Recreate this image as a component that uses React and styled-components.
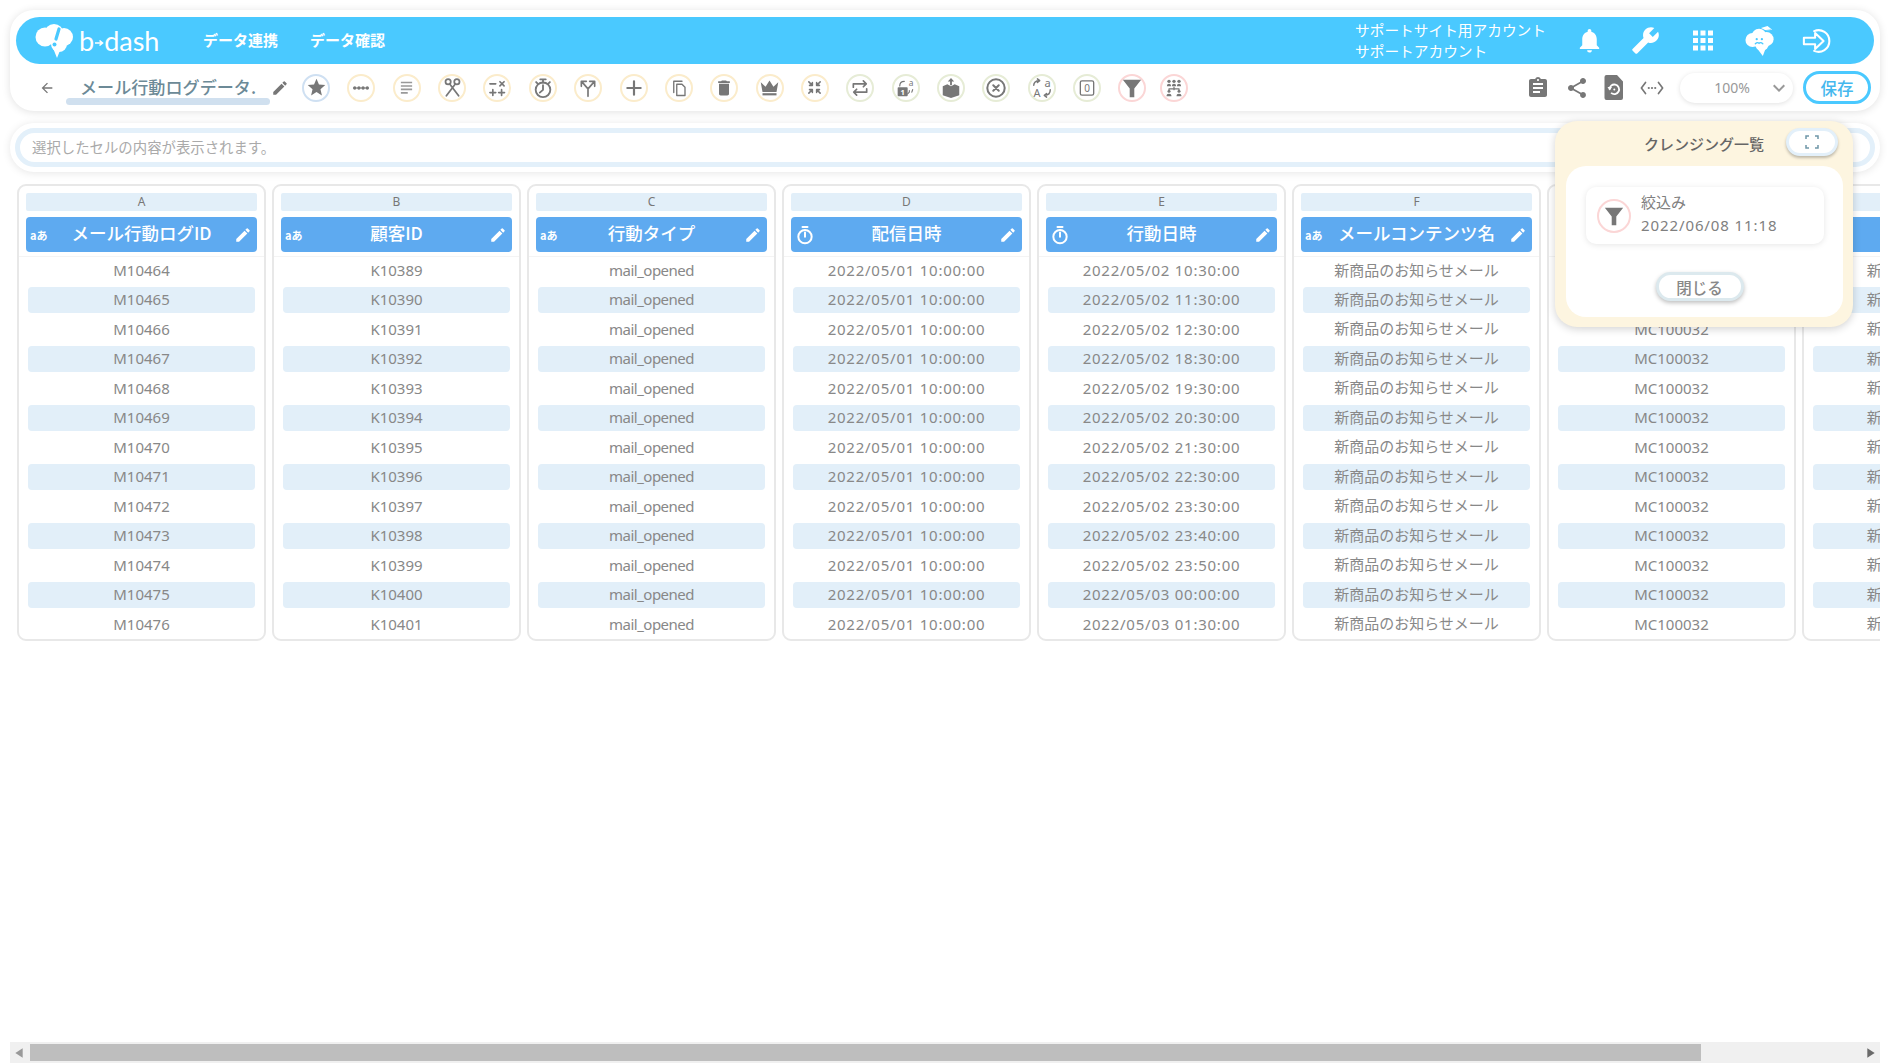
import React from 'react'
import styled, { createGlobalStyle } from 'styled-components'
import { MdStar, MdEdit, MdDelete, MdNotifications, MdBuild, MdApps, MdAssignment, MdShare, MdKeyboardArrowDown, MdArrowBack, MdPlayArrow } from 'react-icons/md'

const GlobalStyle = createGlobalStyle`
  html, body {
    margin: 0;
    padding: 0;
    background: #fff;
    font-family: "Noto Sans", "Noto Sans CJK JP", sans-serif;
  }
  * { box-sizing: border-box; }
`

const Page = styled.div`
  position: relative;
  width: 1890px;
  height: 1063px;
  padding-top: 10px;
  overflow: hidden;
  display: flex;
  flex-direction: column;
`

const TopCard = styled.div`
  margin: 0 10px;
  height: 101px;
  padding: 7px 6px 0;
  background: #fff;
  border-radius: 24px;
  box-shadow: 0 1px 8px rgba(0, 0, 0, 0.12);
`

const BlueBar = styled.header`
  height: 47px;
  background: #4ac9ff;
  border-radius: 24px;
  display: flex;
  align-items: center;
  padding: 0 42px 0 19px;
  color: #fff;
`

const Logo = styled.div`
  display: flex;
  align-items: center;
  gap: 6px;
  width: 168px;
`

const LogoText = styled.span`
  font-family: "Lato", sans-serif;
  font-size: 27px;
  font-weight: 400;
  line-height: 1;
  display: flex;
  align-items: center;
`

const LogoArrow = styled.svg`
  width: 10px;
  height: 10px;
  margin-top: 5px;
`

const NavItem = styled.a`
  font-family: "Noto Sans CJK JP", sans-serif;
  font-size: 15px;
  font-weight: 700;
  margin-right: 32px;
  padding-bottom: 2px;
`

const BarRight = styled.div`
  margin-left: auto;
  display: flex;
  align-items: center;
  gap: 27px;
`

const Account = styled.div`
  font-family: "Noto Sans CJK JP", sans-serif;
  font-size: 14.7px;
  line-height: 21px;
  width: 193px;
  margin-right: -1px;
  padding-bottom: 2px;
`

const BarIcon = styled.span`
  width: 30px;
  height: 30px;
  display: flex;
  align-items: center;
  justify-content: center;
  ${(p) => (p.$flip ? 'transform: scaleX(-1);' : '')}
`

const Toolbar = styled.div`
  height: 47px;
  display: flex;
  align-items: center;
  padding: 0 3px 0 23px;
  color: #777;
`

const BackButton = styled.span`
  display: flex;
  width: 16px;
  margin-right: 11px;
`

const TitleBox = styled.div`
  position: relative;
  width: 204px;
  padding-left: 14px;
  padding-bottom: 2px;
  font-family: "Noto Sans CJK JP", sans-serif;
  font-size: 17.1px;
  font-weight: 500;
  color: #6c8a97;
  white-space: nowrap;
  &::after {
    content: '';
    position: absolute;
    left: 0;
    right: 0;
    bottom: -4px;
    height: 7px;
    border-radius: 4px;
    background: #d0e0ef;
  }
`

const TitleEdit = styled.span`
  display: flex;
  margin: 0 13px 0 1px;
`

const Tools = styled.div`
  display: flex;
  align-items: center;
  gap: 17.36px;
`

const toneColors = {
  blue: '#cfe0f2',
  orange: '#fbeccb',
  green: '#e6ecd6',
  red: '#fbd6d6',
}

const ToolCircle = styled.span`
  width: 28px;
  height: 28px;
  flex: none;
  border-radius: 50%;
  border: 2px solid ${(p) => toneColors[p.$tone]};
  display: flex;
  align-items: center;
  justify-content: center;
  color: #777;
  ${(p) => (p.$tight ? 'margin-left: -4px;' : '')}
`

const ToolbarRight = styled.div`
  margin-left: auto;
  display: flex;
  align-items: center;
`

const ActionIcon = styled.span`
  width: 24px;
  height: 28px;
  display: flex;
  align-items: center;
  justify-content: center;
  color: #777;
  margin-right: ${(p) => p.$gap}px;
`

const ZoomSelect = styled.div`
  width: 113px;
  height: 30px;
  border-radius: 15px;
  background: #fff;
  box-shadow: 0 1px 5px rgba(0, 0, 0, 0.12);
  display: flex;
  align-items: center;
  justify-content: flex-end;
  padding-right: 2px;
  font-size: 14px;
  color: #999;
  gap: 17px;
  margin-right: 10px;
`

const SaveButton = styled.button`
  width: 68px;
  height: 33px;
  border-radius: 17px;
  border: 3px solid #4ac9ff;
  background: #fff;
  color: #45b8ee;
  padding: 0;
  font-family: "Noto Sans CJK JP", sans-serif;
  font-size: 16.5px;
  font-weight: 500;
`

const FormulaCard = styled.div`
  margin: 12px 10px 0;
  height: 49px;
  padding: 5px;
  background: #fff;
  border-radius: 24px;
  box-shadow: 0 1px 8px rgba(0, 0, 0, 0.1);
`

const FormulaInput = styled.div`
  height: 39px;
  border: 5px solid #e3f0fa;
  border-radius: 20px;
  display: flex;
  align-items: center;
  padding: 0 0 2px 12px;
  font-family: "Noto Sans CJK JP", sans-serif;
  font-size: 14.4px;
  color: #aaa;
`

const TableArea = styled.div`
  margin: 12px 10px 0 17px;
  display: flex;
  gap: 6px;
  overflow: hidden;
  align-items: flex-start;
`

const Column = styled.section`
  flex: 0 0 ${(p) => p.$width}px;
  height: 457px;
  border: 2px solid #e8e8e8;
  border-radius: 9px;
  padding-top: 7px;
  background: #fff;
`

const ColLetter = styled.div`
  height: 18px;
  margin: 0 7px;
  background: #e2eff9;
  border-radius: 2px;
  font-size: 12px;
  line-height: 17px;
  text-align: center;
  color: #777;
`

const ColHead = styled.div`
  position: relative;
  height: 35px;
  margin: 6px 7px 3.5px;
  padding-bottom: 4px;
  background: #5eaaf0;
  border-radius: 4px;
  display: flex;
  align-items: center;
  justify-content: center;
  color: #fff;
  font-family: "Noto Sans CJK JP", sans-serif;
  font-size: 17.5px;
  font-weight: 500;
`

const TypeIcon = styled.span`
  position: absolute;
  left: 4px;
  top: 50%;
  transform: translateY(-50%);
  display: flex;
  font-size: 11px;
  font-weight: 700;
`

const HeadEdit = styled.span`
  position: absolute;
  right: 5px;
  top: 50%;
  transform: translateY(-50%);
  display: flex;
`

const Row = styled.div`
  height: 29.53px;
  padding: 2px 9px;
  border-top: ${(p) => (p.$first ? '1px solid #f4f4f4' : 'none')};
`

const Cell = styled.div`
  height: 100%;
  padding-bottom: ${(p) => (p.$cjk ? 3 : 1)}px;
  border-radius: 4px;
  background: ${(p) => (p.$zebra ? '#e2eff9' : 'transparent')};
  display: flex;
  align-items: center;
  justify-content: center;
  font-family: "Noto Sans", "Noto Sans CJK JP", sans-serif;
  font-size: 15px;
  letter-spacing: ${(p) => p.$spacing || 0}px;
  color: #888;
  white-space: nowrap;
`

const Panel = styled.aside`
  position: absolute;
  left: 1555px;
  top: 121px;
  width: 298px;
  height: 206px;
  padding: 45px 10px 10px 11px;
  background: #fdf5e0;
  border-radius: 22px;
  box-shadow: 0 2px 8px rgba(0, 0, 0, 0.18);
`

const PanelTitle = styled.div`
  position: absolute;
  left: 0;
  right: 0;
  top: 12px;
  text-align: center;
  font-family: "Noto Sans CJK JP", sans-serif;
  font-size: 15px;
  font-weight: 500;
  color: #666;
`

const ExpandButton = styled.span`
  position: absolute;
  top: 7px;
  right: 15px;
  width: 52px;
  height: 28px;
  background: #fff;
  border: 3px solid #e3f0fa;
  border-radius: 14px;
  box-shadow: 0 2px 3px rgba(0, 0, 0, 0.25);
  display: flex;
  align-items: center;
  justify-content: center;
`

const PanelBody = styled.div`
  height: 151px;
  background: #fff;
  border-radius: 20px;
  padding: 21px 19px 0 20px;
  display: flex;
  flex-direction: column;
  align-items: center;
`

const LogCard = styled.div`
  width: 100%;
  height: 57px;
  border-radius: 10px;
  background: #fff;
  box-shadow: 0 1px 6px rgba(0, 0, 0, 0.1);
  display: flex;
  align-items: center;
  padding-left: 11px;
  gap: 10px;
`

const LogCircle = styled.span`
  width: 34px;
  height: 34px;
  border: 2px solid #fbd6d6;
  border-radius: 50%;
  display: flex;
  align-items: center;
  justify-content: center;
  color: #777;
`

const LogText = styled.div`
  font-family: "Noto Sans", "Noto Sans CJK JP", sans-serif;
  font-size: 15px;
  line-height: 23px;
  padding-bottom: 4px;
  color: #808080;
`

const LogDate = styled.span`
  letter-spacing: 0.9px;
`

const CloseButton = styled.button`
  margin: 28px 11px 0 0;
  width: 88px;
  height: 29px;
  padding: 0;
  background: #fff;
  border: 3px solid #dce9ee;
  border-radius: 15px;
  box-shadow: 0 2px 4px rgba(0, 0, 0, 0.25);
  font-family: "Noto Sans CJK JP", sans-serif;
  font-size: 15.5px;
  font-weight: 500;
  color: #888;
`

const ScrollBar = styled.div`
  margin: auto 10px 0;
  height: 21px;
  padding: 2px 0;
  background: #f0f0f0;
  display: flex;
  align-items: center;
  color: #6a6a6a;
`

const ScrollArrow = styled.span`
  flex: none;
  width: 20px;
  display: flex;
  justify-content: center;
  ${(p) => (p.$left ? 'transform: scaleX(-1); color: #999;' : 'margin-left: auto;')}
`

const ScrollThumb = styled.div`
  flex: none;
  width: 1671px;
  height: 17px;
  background: #bebebe;
`

/* toolbar and logo drawings */
const Svg = ({ size = 20, children, fill = 'none', ...rest }) => (
  <svg width={size} height={size} viewBox="0 0 24 24" fill={fill} stroke={fill === 'none' ? 'currentColor' : 'none'} strokeWidth="2" strokeLinecap="round" strokeLinejoin="round" {...rest}>
    {children}
  </svg>
)

const DotsIcon = () => (
  <Svg>
    <path d="M3 12h18" strokeWidth="1.4" />
    <g fill="currentColor" stroke="none">
      <circle cx="4.5" cy="12" r="2" /><circle cx="9.5" cy="12" r="2" /><circle cx="14.5" cy="12" r="2" /><circle cx="19.5" cy="12" r="2" />
    </g>
  </Svg>
)
const LinesIcon = () => (
  <Svg size={15} style={{ color: '#999' }}>
    <path d="M3 4h18M3 9.500h18M3 15h18M3 20.500h11" strokeWidth="2.600" strokeLinecap="butt" />
  </Svg>
)
const ScissorsIcon = () => (
  <Svg size={21}>
    <circle cx="7" cy="5.500" r="3" /><circle cx="17" cy="5.500" r="3" />
    <path d="M8.800 8 19 21.500M15.200 8 5 21.500" />
  </Svg>
)
const CalcIcon = () => (
  <Svg size={20}>
    <path d="M3.500 7h7M15.500 4.500l5 5M20.500 4.500l-5 5M7 14v7M3.500 17.500h7M17.500 14v7M14 17.500h7" />
  </Svg>
)
const TimerIcon = () => (
  <Svg size={22}>
    <circle cx="12" cy="14" r="8" />
    <path d="M9 2.500h6M12 2.500V6M4.500 5.500l2 2M19.500 5.500l-2 2M12 9v5l-3.500 3" />
  </Svg>
)
const SplitIcon = () => (
  <Svg size={20}>
    <path d="M12 22v-9L5 5M12 13l7-8M4 10V4h6M14 4h6v6" />
  </Svg>
)
const PlusIcon = () => (
  <Svg size={20} strokeWidth="2.600">
    <path d="M12 4v16M4 12h16" />
  </Svg>
)
const CopyIcon = () => (
  <Svg size={18} strokeWidth="1.800">
    <path d="M16 3H5v15" />
    <path d="M9 7h7l4 4v11H9z" />
  </Svg>
)
const CrownIcon = () => (
  <Svg size={21} fill="currentColor">
    <path d="M2 6l5.500 5L12 4l4.500 7L22 6l-2 11H4z" />
    <rect x="4" y="18.500" width="16" height="2.500" />
  </Svg>
)
const CompressIcon = () => (
  <Svg size={17} strokeWidth="2.200">
    <path d="M4 4l4.500 4.500M5 9h4V5M20 4l-4.500 4.500M19 9h-4V5M4 20l4.500-4.500M5 15h4v4M20 20l-4.500-4.500M19 15h-4v4" />
  </Svg>
)
const RepeatIcon = () => (
  <Svg size={20}>
    <path d="M4 11V7h15M16 3.500 19.500 7 16 10.500M20 13v4H5M8 13.500 4.500 17 8 20.500" />
  </Svg>
)
const LockIcon = () => (
  <Svg size={20} strokeWidth="1.400">
    <rect x="2" y="11" width="12" height="11" rx="1" fill="currentColor" stroke="none" />
    <text x="8" y="20" fontSize="9" fontWeight="700" textAnchor="middle" fill="#fff" stroke="none">1</text>
    <text x="18" y="10" fontSize="10" textAnchor="middle" fill="currentColor" stroke="none">a</text>
    <path d="M4.500 9.500C4.500 6 7 4 10 4M16 15v2l-2 2M20 14l-1 3" />
  </Svg>
)
const BoxUpIcon = () => (
  <Svg size={22} fill="currentColor">
    <path d="M3 10l5-2 4 2 4-2 5 2v10l-9 3-9-3z" />
    <path d="M11 9V5H8.500L12 1l3.500 4H13v4z" />
  </Svg>
)
const CircleXIcon = () => (
  <Svg size={22} strokeWidth="2.200">
    <circle cx="12" cy="12" r="9.500" />
    <path d="M9 9l6 6M15 9l-6 6" />
  </Svg>
)
const TranslateIcon = () => (
  <Svg size={22} strokeWidth="1.600">
    <text x="6.500" y="22" fontSize="12" textAnchor="middle" fill="currentColor" stroke="none">A</text>
    <text x="18" y="11" fontSize="12" textAnchor="middle" fill="currentColor" stroke="none">a</text>
    <path d="M3 9c0-3 2-5 6-5M7 2l2.500 2L7 6M21 14c0 4-2 6-6 6M17 18l-2.500 2 2.500 2" />
  </Svg>
)
const ZeroBoxIcon = () => (
  <Svg size={20} strokeWidth="1.600">
    <rect x="4" y="3.500" width="16" height="17" rx="2" />
    <text x="12" y="16.500" fontSize="12" textAnchor="middle" fill="currentColor" stroke="none">0</text>
  </Svg>
)
const FunnelIcon = ({ size = 22 }) => (
  <Svg size={size} fill="currentColor">
    <path d="M2 3h20l-7.500 9.500V22h-5v-9.500z" />
  </Svg>
)
const PeopleIcon = () => (
  <Svg size={20} strokeWidth="1.500">
    <g fill="currentColor" stroke="none">
      <circle cx="6" cy="4" r="2" /><circle cx="12" cy="4" r="2" /><circle cx="18" cy="4" r="2" />
      <path d="M3.500 10c0-2 1-3 2.500-3s2.500 1 2.500 3zM9.500 10c0-2 1-3 2.500-3s2.500 1 2.500 3zM15.500 10c0-2 1-3 2.500-3s2.500 1 2.500 3z" />
      <circle cx="6" cy="16" r="1.800" /><circle cx="18" cy="16" r="1.800" />
      <path d="M3 22c0-2 1-3 3-3s3 1 3 3zM15 22c0-2 1-3 3-3s3 1 3 3z" />
    </g>
    <path d="M12 11v3M6 14v-1h12v1" />
  </Svg>
)

const CloudLogo = () => (
  <svg width="38" height="34" viewBox="0 0 38 34">
    <g fill="#fff">
      <circle cx="10" cy="13" r="9.500" /><circle cx="19" cy="9.500" r="9.500" /><circle cx="29" cy="13" r="9" />
      <circle cx="24" cy="20" r="8" /><path d="M18 24h8l-4 10z" />
    </g>
    <path d="M24 5l-3 10" stroke="#4ac9ff" strokeWidth="3.200" strokeLinecap="round" />
    <circle cx="19.500" cy="20.500" r="2" fill="#4ac9ff" />
  </svg>
)

const BrainIcon = () => (
  <svg width="32" height="34" viewBox="0 0 32 34">
    <g fill="#fff">
      <circle cx="8" cy="16" r="7.500" /><circle cx="15" cy="12" r="8" /><circle cx="23" cy="15" r="7.500" />
      <circle cx="18" cy="20" r="7.500" /><path d="M13 25h9l-3 8z" />
      <path d="M17 3l7-2 5 4-6 1z" />
    </g>
    <path d="M21 6l7-1" stroke="#4ac9ff" strokeWidth="0.800" />
    <circle cx="12.500" cy="15" r="1.200" fill="#4ac9ff" /><circle cx="18" cy="15" r="1.200" fill="#4ac9ff" />
    <path d="M11 20c2-2 3-1.500 4-.5 1-1 2-1.500 4 .5" stroke="#4ac9ff" strokeWidth="1.400" fill="none" strokeLinecap="round" />
  </svg>
)

const LoginIcon = () => (
  <svg width="32" height="26" viewBox="0 0 32 26" fill="none" stroke="#fff" strokeWidth="2.200" strokeLinejoin="round" strokeLinecap="round">
    <path d="M2 9.500h12V4.500L23 13l-9 8.500v-5H2z" />
    <path d="M13 2.500A11.500 11.500 0 1 1 13 23.500" />
  </svg>
)

const RestoreDocIcon = () => (
  <svg width="20" height="27" viewBox="0 0 20 27">
    <path d="M2.500 1H13l6 6.500V24a2 2 0 0 1-2 2H2.500a2 2 0 0 1-2-2V3a2 2 0 0 1 2-2z" fill="currentColor" />
    <path d="M5.500 15.500a4.800 4.800 0 1 1 1.600 3.400" fill="none" stroke="#fff" strokeWidth="1.800" />
    <path d="M3.500 13h4.500l-2.200 3.500z" fill="#fff" />
    <circle cx="10.300" cy="15.500" r="1" fill="#fff" />
  </svg>
)

const CodeIcon = () => (
  <svg width="26" height="16" viewBox="0 0 26 16" fill="none" stroke="currentColor" strokeWidth="1.800" strokeLinecap="round" strokeLinejoin="round">
    <path d="M6 2 1.500 8 6 14M20 2l4.500 6L20 14" />
    <g fill="currentColor" stroke="none"><circle cx="9.500" cy="8" r="1.200" /><circle cx="13" cy="8" r="1.200" /><circle cx="16.500" cy="8" r="1.200" /></g>
  </svg>
)

const ClockIcon = () => (
  <Svg size={20} strokeWidth="2.400">
    <circle cx="12" cy="14" r="8" />
    <path d="M9 2.500h6M12 9v5" />
  </Svg>
)

const ExpandIcon = () => (
  <svg width="14" height="14" viewBox="0 0 14 14" fill="none" stroke="#6f97a8" strokeWidth="1.500">
    <path d="M1 4V1h3M10 1h3v3M1 10v3h3M10 13h3v-3" />
  </svg>
)

const tools = [
  { tone: 'blue', icon: <MdStar size={21} /> },
  { tone: 'orange', icon: <DotsIcon /> },
  { tone: 'orange', icon: <LinesIcon /> },
  { tone: 'orange', icon: <ScissorsIcon /> },
  { tone: 'orange', icon: <CalcIcon /> },
  { tone: 'orange', icon: <TimerIcon /> },
  { tone: 'orange', icon: <SplitIcon /> },
  { tone: 'orange', icon: <PlusIcon /> },
  { tone: 'orange', icon: <CopyIcon /> },
  { tone: 'orange', icon: <MdDelete size={20} /> },
  { tone: 'orange', icon: <CrownIcon /> },
  { tone: 'orange', icon: <CompressIcon /> },
  { tone: 'green', icon: <RepeatIcon /> },
  { tone: 'green', icon: <LockIcon /> },
  { tone: 'green', icon: <BoxUpIcon /> },
  { tone: 'green', icon: <CircleXIcon /> },
  { tone: 'green', icon: <TranslateIcon /> },
  { tone: 'green', icon: <ZeroBoxIcon /> },
  { tone: 'red', icon: <FunnelIcon /> },
  { tone: 'red', tight: true, icon: <PeopleIcon /> },
]

const seq = (prefix, start) => Array.from({ length: 13 }, (_, i) => `${prefix}${start + i}`)
const same = (value) => Array.from({ length: 13 }, () => value)

const columns = [
  { letter: 'A', title: 'メール行動ログID', rows: seq('M', 10464) },
  { letter: 'B', title: '顧客ID', rows: seq('K', 10389) },
  { letter: 'C', title: '行動タイプ', spacing: -0.5, rows: same('mail_opened') },
  { letter: 'D', title: '配信日時', date: true, spacing: 0.76, rows: same('2022/05/01 10:00:00') },
  {
    letter: 'E',
    title: '行動日時',
    date: true,
    spacing: 0.76,
    rows: ['10:30', '11:30', '12:30', '18:30', '19:30', '20:30', '21:30', '22:30', '23:30', '23:40', '23:50']
      .map((t) => `2022/05/02 ${t}:00`)
      .concat(['2022/05/03 00:00:00', '2022/05/03 01:30:00']),
  },
  { letter: 'F', title: 'メールコンテンツ名', cjk: true, rows: same('新商品のお知らせメール') },
  { letter: 'G', title: 'メールコンテンツID', rows: same('MC100032') },
  { letter: 'H', title: '件名', cjk: true, width: 294, rows: same('新商品のお知らせメール') },
]

export default function App() {
  return (
    <Page>
      <GlobalStyle />
      <TopCard>
        <BlueBar>
          <Logo>
            <CloudLogo />
            <LogoText>
              b
              <LogoArrow viewBox="0 0 10 10" fill="none" stroke="#fff" strokeWidth="1.600">
                <path d="M1 5h7M5.500 2.500 8.500 5l-3 2.500" />
              </LogoArrow>
              dash
            </LogoText>
          </Logo>
          <NavItem>データ連携</NavItem>
          <NavItem>データ確認</NavItem>
          <BarRight>
            <Account>
              サポートサイト用アカウント
              <br />
              サポートアカウント
            </Account>
            <BarIcon><MdNotifications size={29} color="#fff" /></BarIcon>
            <BarIcon $flip><MdBuild size={29} color="#fff" /></BarIcon>
            <BarIcon><MdApps size={31} color="#fff" /></BarIcon>
            <BarIcon><BrainIcon /></BarIcon>
            <BarIcon><LoginIcon /></BarIcon>
          </BarRight>
        </BlueBar>
        <Toolbar>
          <BackButton><MdArrowBack size={16} /></BackButton>
          <TitleBox>メール行動ログデータ.</TitleBox>
          <TitleEdit><MdEdit size={18} /></TitleEdit>
          <Tools>
            {tools.map((t, i) => (
              <ToolCircle key={i} $tone={t.tone} $tight={t.tight}>{t.icon}</ToolCircle>
            ))}
          </Tools>
          <ToolbarRight>
            <ActionIcon $gap={15}><MdAssignment size={28} /></ActionIcon>
            <ActionIcon $gap={13}><MdShare size={26} /></ActionIcon>
            <ActionIcon $gap={14}><RestoreDocIcon /></ActionIcon>
            <ActionIcon $gap={16}><CodeIcon /></ActionIcon>
            <ZoomSelect>
              100%
              <MdKeyboardArrowDown size={24} />
            </ZoomSelect>
            <SaveButton>保存</SaveButton>
          </ToolbarRight>
        </Toolbar>
      </TopCard>

      <FormulaCard>
        <FormulaInput>選択したセルの内容が表示されます。</FormulaInput>
      </FormulaCard>

      <TableArea>
        {columns.map((col) => (
          <Column key={col.letter} $width={col.width || 249}>
            <ColLetter>{col.letter}</ColLetter>
            <ColHead>
              <TypeIcon>{col.date ? <ClockIcon /> : 'aあ'}</TypeIcon>
              {col.title}
              <HeadEdit><MdEdit size={18} /></HeadEdit>
            </ColHead>
            {col.rows.map((value, i) => (
              <Row key={i} $first={i === 0}>
                <Cell $zebra={i % 2 === 1} $spacing={col.spacing} $cjk={col.cjk}>{value}</Cell>
              </Row>
            ))}
          </Column>
        ))}
      </TableArea>

      <Panel>
        <PanelTitle>クレンジング一覧</PanelTitle>
        <ExpandButton><ExpandIcon /></ExpandButton>
        <PanelBody>
          <LogCard>
            <LogCircle><FunnelIcon size={22} /></LogCircle>
            <LogText>
              絞込み
              <br />
              <LogDate>2022/06/08 11:18</LogDate>
            </LogText>
          </LogCard>
          <CloseButton>閉じる</CloseButton>
        </PanelBody>
      </Panel>

      <ScrollBar>
        <ScrollArrow $left><MdPlayArrow size={16} /></ScrollArrow>
        <ScrollThumb />
        <ScrollArrow><MdPlayArrow size={16} /></ScrollArrow>
      </ScrollBar>
    </Page>
  )
}
